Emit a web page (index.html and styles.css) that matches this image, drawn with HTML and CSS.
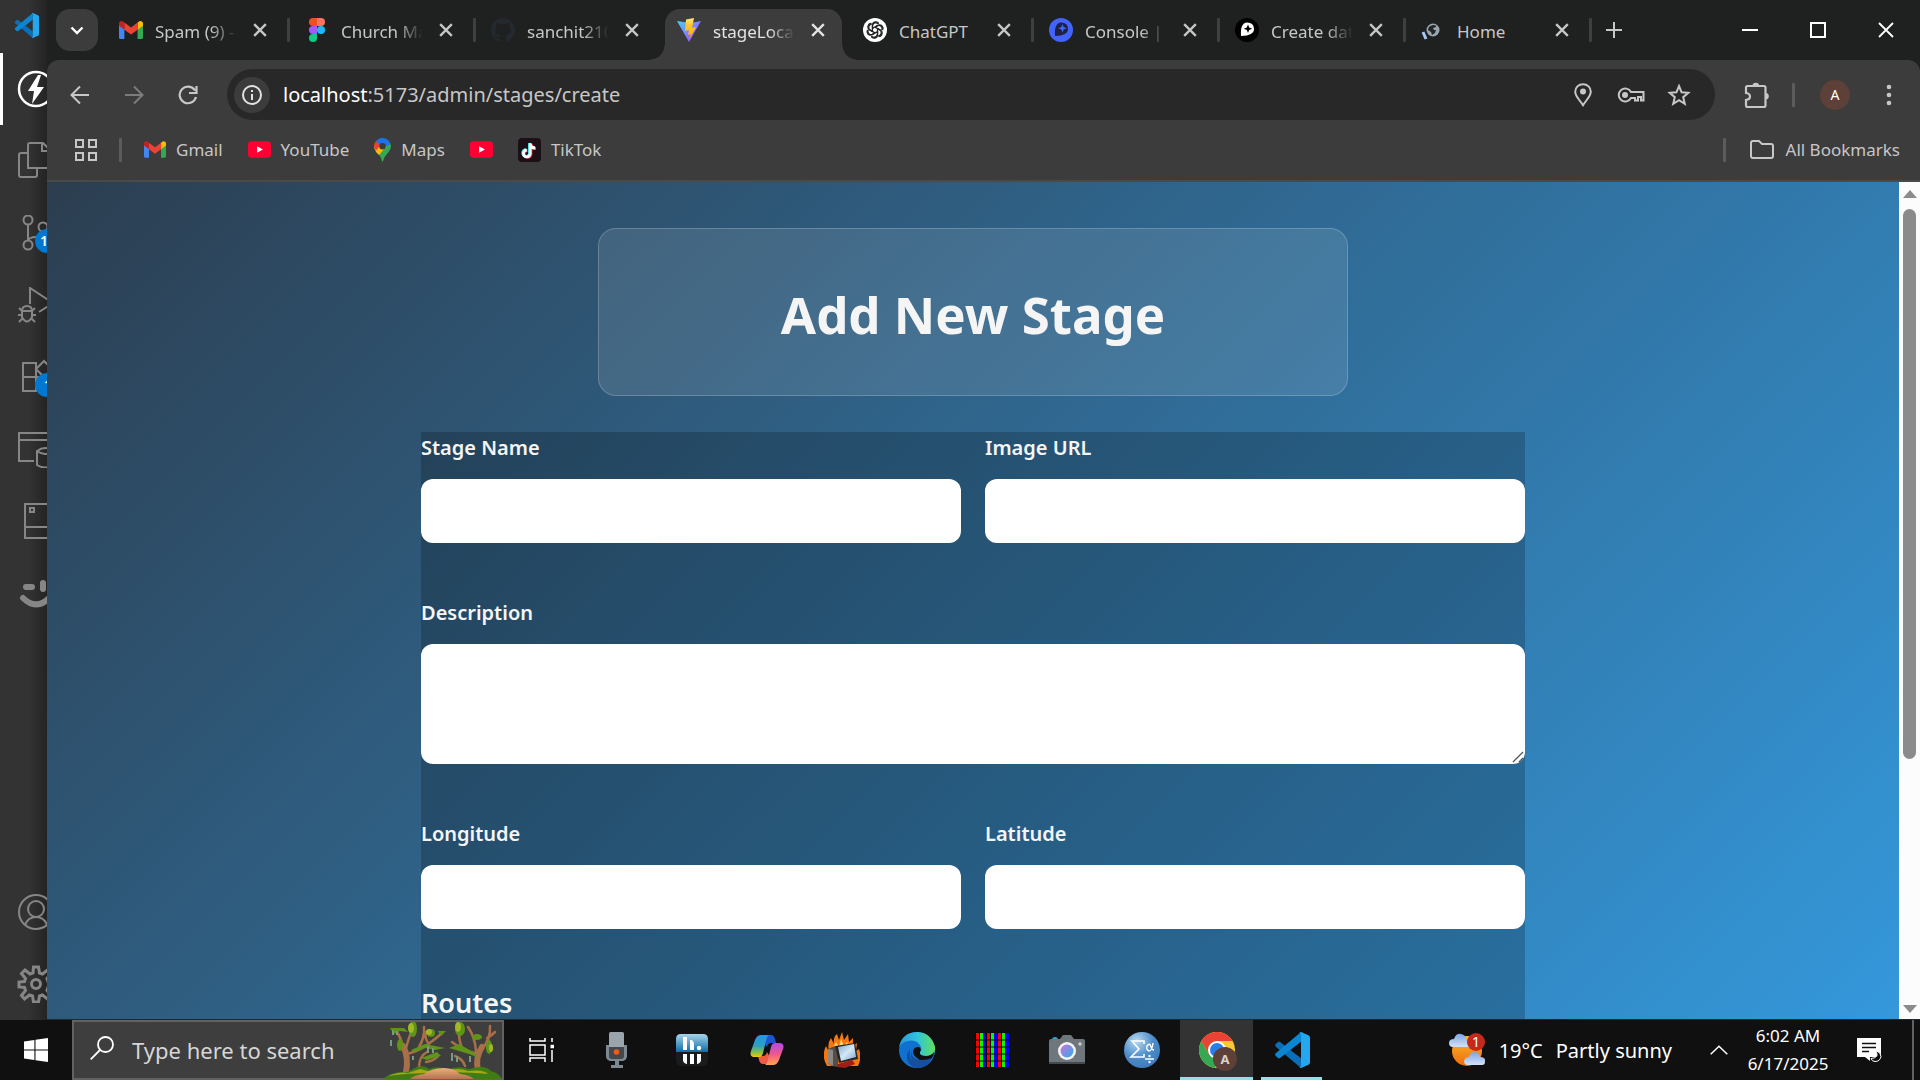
FILE: index.html
```html
<!DOCTYPE html>
<html lang="en">
<head>
<meta charset="utf-8">
<title>Add New Stage</title>
<link rel="stylesheet" href="styles.css">
</head>
<body>
<svg class="defs" aria-hidden="true">
  <defs>
    <linearGradient id="vite-blue" x1="0" y1="0" x2="1" y2="1"><stop offset="0" stop-color="#41d1ff"/><stop offset="1" stop-color="#bd34fe"/></linearGradient>
    <linearGradient id="vite-gold" x1="0" y1="0" x2="0" y2="1"><stop offset="0" stop-color="#ffea83"/><stop offset=".3" stop-color="#ffca28"/><stop offset="1" stop-color="#ffa800"/></linearGradient>
    <linearGradient id="edge-top" x1="0" y1="0" x2="1" y2="0"><stop offset="0" stop-color="#2797d8"/><stop offset=".5" stop-color="#2fc3dd"/><stop offset="1" stop-color="#62e05a"/></linearGradient>
    <linearGradient id="cop-a" x1="0" y1="0" x2="0" y2="1"><stop offset="0" stop-color="#1a9be8"/><stop offset=".5" stop-color="#2f9fc0"/><stop offset=".8" stop-color="#8fc03c"/><stop offset="1" stop-color="#f5c518"/></linearGradient>
    <linearGradient id="cop-b" x1="0" y1="0" x2="0" y2="1"><stop offset="0" stop-color="#b04be8"/><stop offset=".5" stop-color="#f0568c"/><stop offset="1" stop-color="#ffa34d"/></linearGradient>
    <linearGradient id="lens" x1="0" y1="0" x2="1" y2="1"><stop offset="0" stop-color="#d070d8"/><stop offset="1" stop-color="#28b0f0"/></linearGradient>
    <radialGradient id="ball" cx=".35" cy=".25" r=".9"><stop offset="0" stop-color="#b8daf2"/><stop offset=".5" stop-color="#4d8cc8"/><stop offset="1" stop-color="#3a78b8"/></radialGradient>
    <linearGradient id="sun" x1="0" y1="0" x2="0" y2="1"><stop offset="0" stop-color="#fbbc2a"/><stop offset="1" stop-color="#ef6a10"/></linearGradient>
    <linearGradient id="cloud" x1="0" y1="0" x2="0" y2="1"><stop offset="0" stop-color="#7da5e8"/><stop offset="1" stop-color="#d4e2fa"/></linearGradient>
    <linearGradient id="bars" x1="0" y1="0" x2="0" y2="1"><stop offset="0" stop-color="#a8d4ea"/><stop offset="1" stop-color="#0a6ea8"/></linearGradient>
    <linearGradient id="screen" x1="0" y1="0" x2="1" y2="1"><stop offset="0" stop-color="#7fa8cc"/><stop offset=".5" stop-color="#d4e8f6"/><stop offset="1" stop-color="#7ba6cc"/></linearGradient>
    <linearGradient id="path-sand" x1="0" y1="0" x2="0" y2="1"><stop offset="0" stop-color="#eab080"/><stop offset="1" stop-color="#b8704c"/></linearGradient>
    <symbol id="i-vscode" viewBox="0 0 24 24"><path fill="#0a6fb8" d="M1 8.2 2.7 6.6q.7-.4 1.3 0L18 17.5V24L1.2 9.8Q.5 9 1 8.2z"/><path fill="#0a86d2" d="M1 15.8l1.7 1.6q.7.4 1.3 0L18 6.5V0L1.2 14.2q-.7.8-.2 1.6z"/><path fill="#25a7ee" d="M17 .4 18 0l5 2.2q1 .5 1 1.5v16.6q0 1-1 1.5L18 24l-1-.4 1-.8V1.2z"/></symbol>
    <symbol id="i-gmail" viewBox="0 0 24 18"><path fill="#4285f4" d="M0 3v13.4Q0 18 1.6 18H5.4V7z"/><path fill="#34a853" d="M24 3v13.4q0 1.6-1.6 1.6H18.6V7z"/><path fill="#fbbc04" d="M18.6 1.6V8.7L24 4.7V2.5C24 .2 21.3-.8 19.600.8z"/><path fill="#c5221f" d="M0 2.500V4.700L5.400 8.700V1.600L4.400.800C2.700-.800 0 .200 0 2.500z"/><path fill="#ea4335" d="M5.400 8.700V1.600L12 6.500l6.600-4.900v7.100L12 13.600z"/></symbol>
    <symbol id="i-youtube" viewBox="0 0 24 17"><rect width="24" height="17" rx="3.500" fill="#ff0033"/><path fill="#fff" d="M9.500 5v7l6-3.500z"/></symbol>
    <symbol id="i-close" viewBox="0 0 12 12"><path d="M1 1l10 10M11 1 1 11" fill="none" stroke="currentColor" stroke-width="2"/></symbol>
  </defs>
</svg>

<div class="desktop">
  <div class="workspace">
    <nav class="activity" aria-label="Editor activity bar">
      <div class="editor-logo"><svg width="25" height="25"><use href="#i-vscode"/></svg></div>
      <button class="act active" aria-label="Thunder client"><svg width="38" height="38" viewBox="0 0 38 38"><circle cx="19" cy="19" r="17" fill="none" stroke="#fff" stroke-width="2.500"/><path fill="#fff" stroke="none" d="M21 5 11 21h6l-2 13 12-17h-7l4-12z"/></svg></button>
      <button class="act" aria-label="Explorer"><svg width="40" height="40" viewBox="0 0 40 40"><path d="M12 27V4q0-2 2-2h13l7 7v16q0 2-2 2zM12 12H5q-2 0-2 2v20q0 2 2 2h14q2 0 2-2v-7M26 2v8h8"/></svg></button>
      <button class="act" aria-label="Source control"><svg width="36" height="36" viewBox="0 0 36 36"><circle cx="10" cy="5" r="4.500"/><circle cx="10" cy="30" r="4.500"/><circle cx="25" cy="12" r="4.500"/><path d="M10 10v15M25 17q0 5-7 5-7 0-8 4"/></svg><span class="count">1</span></button>
      <button class="act" aria-label="Run and debug"><svg width="36" height="36" viewBox="0 0 36 36"><path d="M12 17V1l23 15-14 9"/><path d="M4 24q0-5 5-5t5 5v6q-5 9-10 0zM4 24h10M1 21l3 3M17 21l-3 3M0 28h4M14 28h4M1 35l4-4M17 35l-4-4"/></svg></button>
      <button class="act" aria-label="Extensions"><svg width="36" height="36" viewBox="0 0 36 36"><path d="M5 4h13v28H5zM5 18h27v14H18M26 2l8 8-8 8-8-8z"/></svg><span class="count low">1</span></button>
      <button class="act" aria-label="Database"><svg width="38" height="38" viewBox="0 0 38 38"><path d="M17 31H2V3h34v14M2 10h34"/><path d="M20 21q8-6 16 0v14q-8 5-16 0zM20 21q8 6 16 0"/></svg></button>
      <button class="act" aria-label="Storage"><svg width="36" height="36" viewBox="0 0 36 36"><path d="M7 1h28v34H7zM7 24h28M12 5h4v4h-4z"/></svg></button>
      <button class="act" aria-label="Assistant"><svg width="36" height="36" viewBox="0 0 36 36"><path class="thick" d="M8 12h6M25 8v6M5 23q13 13 26 0"/></svg></button>
      <span class="spacer"></span>
      <button class="act" aria-label="Accounts"><svg width="38" height="38" viewBox="0 0 38 38"><circle cx="19" cy="19" r="17"/><circle cx="19" cy="16" r="8"/><path d="M8 32q3-8 11-8t11 8"/></svg></button>
      <button class="act" aria-label="Manage"><svg width="38" height="38" viewBox="0 0 38 38"><circle cx="19" cy="19" r="4.500" stroke-width="3"/><path stroke-width="3" d="M16.500 2h5l1 6 3 1 5-4 3.500 3.500-4 5 1 3 6 .5v5l-6 .5-1 3 4 5-3.500 3.500-5-4-3 1-1 6h-5l-1-6-3-1-5 4L4.500 30.500l4-5-1-3-5.500-.5v-5l5.500-.5 1-3-4-5L8 5l5 4 3-1z"/></svg></button>
    </nav>

    <section class="browser">
      <header class="tabstrip">
        <button class="tab-search" aria-label="Search tabs"><svg width="14" height="9" viewBox="0 0 14 9"><path d="M1.500 1.500 7 7l5.500-5.500" fill="none" stroke="#fff" stroke-width="2.400"/></svg></button>
        <div class="tabs">
          <div class="tab"><svg class="fav" width="24" height="18"><use href="#i-gmail"/></svg><a href="#mail">Spam (9) -</a><button aria-label="Close"><svg width="14" height="14"><use href="#i-close"/></svg></button></div>
          <div class="tab"><svg class="fav" width="24" height="24" viewBox="0 0 24 24"><path fill="#f24e1e" d="M8 0h4v8H8a4 4 0 0 1 0-8z"/><path fill="#ff7262" d="M12 0h4a4 4 0 0 1 0 8h-4z"/><path fill="#a259ff" d="M8 8h4v8H8a4 4 0 0 1 0-8z"/><circle cx="16" cy="12" r="4" fill="#1abcfe"/><path fill="#0acf83" d="M8 16h4v4a4 4 0 1 1-4-4z"/></svg><a href="#church">Church Ma</a><button aria-label="Close"><svg width="14" height="14"><use href="#i-close"/></svg></button></div>
          <div class="tab before"><svg class="fav" width="24" height="24" viewBox="0 0 16 16"><path fill="#24292f" d="M8 0C3.580 0 0 3.580 0 8c0 3.540 2.290 6.530 5.470 7.590.4.070.550-.170.550-.380v-1.490c-2.230.48-2.690-.94-2.690-.94-.36-.92-.89-1.170-.89-1.170-.73-.5.050-.49.050-.49.800.060 1.230.83 1.230.83.71 1.220 1.870.870 2.330.66.070-.52.280-.87.500-1.070-1.780-.2-3.640-.89-3.640-3.950 0-.87.310-1.590.82-2.150-.08-.2-.36-1.020.08-2.120 0 0 .67-.21 2.200.82a7.600 7.600 0 0 1 4 0c1.530-1.040 2.200-.82 2.200-.82.44 1.100.16 1.920.08 2.120.51.56.82 1.270.82 2.150 0 3.070-1.870 3.750-3.650 3.950.29.250.54.73.54 1.480v2.190c0 .210.150.46.55.38A8 8 0 0 0 8 0z"/></svg><a href="#repo">sanchit210</a><button aria-label="Close"><svg width="14" height="14"><use href="#i-close"/></svg></button></div>
          <div class="tab current"><svg class="fav" width="24" height="24" viewBox="0 0 24 24"><path fill="url(#vite-blue)" d="M0 3l12 21L24 3l-10 2z"/><path fill="url(#vite-gold)" d="M17 0 9 1.500 8 13l4-1-1 5 3-1-2 6 7-13-4 1z"/></svg><a href="#stage">stageLoca</a><button aria-label="Close"><svg width="14" height="14"><use href="#i-close"/></svg></button></div>
          <div class="tab"><svg class="fav" width="24" height="24" viewBox="0 0 24 24"><circle cx="12" cy="12" r="12" fill="#fff"/><g fill="none" stroke="#222" stroke-width="1.300"><path id="knot" d="M9.500 10.500V7a3.400 3.400 0 0 1 6.300-1.500M9.500 10.500l4.800-2.800a3.400 3.400 0 0 1 4.500 4.500"/><use href="#knot" transform="rotate(60 12 12)"/><use href="#knot" transform="rotate(120 12 12)"/><use href="#knot" transform="rotate(180 12 12)"/><use href="#knot" transform="rotate(240 12 12)"/><use href="#knot" transform="rotate(300 12 12)"/></g></svg><a class="short" href="#chat">ChatGPT</a><button aria-label="Close"><svg width="14" height="14"><use href="#i-close"/></svg></button></div>
          <div class="tab"><svg class="fav" width="24" height="24" viewBox="0 0 24 24"><circle cx="12" cy="12" r="12" fill="#4264fb"/><path fill="#1f2140" d="M6 18q-1-13 6-13.500 7 0 7 6.500T6 18z"/><path fill="#4264fb" d="m13.500 6 1.200 3 3 1.200-3 1.200-1.200 3-1.200-3-3-1.200 3-1.200z"/></svg><a href="#console">Console |</a><button aria-label="Close"><svg width="14" height="14"><use href="#i-close"/></svg></button></div>
          <div class="tab"><svg class="fav" width="24" height="24" viewBox="0 0 24 24"><circle cx="12" cy="12" r="12"/><path fill="#fff" d="M6 18q-1-13 6-13.500 7 0 7 6.500T6 18z"/><path d="m13 6.500 1.200 3 3 1.200-3 1.200-1.200 3-1.200-3-3-1.200 3-1.200z"/></svg><a href="#create">Create dat</a><button aria-label="Close"><svg width="14" height="14"><use href="#i-close"/></svg></button></div>
          <div class="tab"><svg class="fav" width="24" height="24" viewBox="0 0 24 24"><circle cx="12" cy="12" r="6.500" fill="#9aa5ae"/><path fill="#23282c" d="M12 7q4 0 3 2l-3 1 1 2h2l-1 3-3 2-1-3-3-2q0-4 5-5z"/><path stroke="#a8c7fa" stroke-width="3" d="m2 14 3 7"/></svg><a class="short" href="#home">Home</a><button aria-label="Close"><svg width="14" height="14"><use href="#i-close"/></svg></button></div>
        </div>
        <button class="new-tab" aria-label="New tab"><svg width="16" height="16" viewBox="0 0 16 16"><path d="M8 0v16M0 8h16" stroke="#c7c7c7" stroke-width="2"/></svg></button>
        <span class="spacer"></span>
        <button class="win" aria-label="Minimize"><svg width="16" height="16" viewBox="0 0 16 16"><path d="M0 8h16" stroke="#fff" stroke-width="2"/></svg></button>
        <button class="win" aria-label="Maximize"><svg width="16" height="16" viewBox="0 0 16 16"><path d="M1 1h14v14H1z" fill="none" stroke="#fff" stroke-width="2"/></svg></button>
        <button class="win" aria-label="Close window"><svg width="16" height="16" viewBox="0 0 16 16"><path d="m1 1 14 14M15 1 1 15" stroke="#fff" stroke-width="1.800"/></svg></button>
      </header>

      <div class="chrome">
        <div class="toolbar">
          <button aria-label="Back"><svg width="20" height="20" viewBox="0 0 20 20"><path d="M19 10H2M10 1.500 1.500 10l8.500 8.500" fill="none" stroke="#c7c7c7" stroke-width="2"/></svg></button>
          <button aria-label="Forward"><svg width="20" height="20" viewBox="0 0 20 20"><path d="M1 10h17M10 1.500 18.500 10 10 18.500" fill="none" stroke="#7c7c7c" stroke-width="2"/></svg></button>
          <button aria-label="Reload"><svg width="20" height="20" viewBox="0 0 20 20"><path d="M17 5.500A8.300 8.300 0 1 0 18 12M18.500 1v7H11" fill="none" stroke="#c7c7c7" stroke-width="2.200"/></svg></button>
          <div class="omnibox">
            <button class="info" aria-label="Site information"><svg width="20" height="20" viewBox="0 0 20 20"><circle cx="10" cy="10" r="9" fill="none" stroke="#e3e3e3" stroke-width="2"/><path d="M10 9v6M10 5v2" stroke="#e3e3e3" stroke-width="2"/></svg></button>
            <a class="url" href="#url"><b>localhost</b>:5173/admin/stages/create</a>
            <button aria-label="Location"><svg width="18" height="24" viewBox="0 0 18 24"><path d="M9 1.200c-4.500 0-7.800 3.300-7.800 7.500 0 4.500 4.300 8 7.800 13.500 3.500-5.500 7.800-9 7.800-13.500C16.800 4.500 13.500 1.200 9 1.200z" fill="none" stroke="#c7c7c7" stroke-width="2"/><circle cx="9" cy="8.500" r="3" fill="#c7c7c7"/></svg></button>
            <button aria-label="Passwords"><svg width="28" height="16" viewBox="0 0 28 16"><path d="M14 5h12.500v8.500h-2.500V10h-3v3.500h-3V11h-4A6.500 6.500 0 1 1 14 5z" fill="none" stroke="#c7c7c7" stroke-width="2"/><circle cx="8" cy="8" r="3" fill="#c7c7c7"/></svg></button>
            <button aria-label="Bookmark"><svg width="24" height="24" viewBox="0 0 24 24"><path d="m12 3 2.600 6.300 6.700.5-5.100 4.400 1.600 6.600L12 17.200l-5.800 3.600 1.600-6.600L2.700 9.800l6.700-.5z" fill="none" stroke="#c7c7c7" stroke-width="2"/></svg></button>
          </div>
          <button class="ext" aria-label="Extensions"><svg width="26" height="26" viewBox="0 0 26 26"><path d="M2 5.500Q2 4 3.500 4H20q1.500 0 1.500 1.500v18q0 1.500-1.500 1.500H3.500Q2 25 2 23.500V18q4-.5 4-3.500T2 11z" fill="none" stroke="#c7c7c7" stroke-width="2.200"/><path fill="#c7c7c7" d="M8.500 4a3.300 3.300 0 0 1 6.600 0zM21.500 11a3.300 3.300 0 0 1 0 6.600z"/></svg></button>
          <i class="rule"></i>
          <button class="avatar">A</button>
          <button class="menu" aria-label="Menu"><svg width="6" height="22" viewBox="0 0 6 22" fill="#c7c7c7"><circle cx="3" cy="3" r="2.300"/><circle cx="3" cy="11" r="2.300"/><circle cx="3" cy="19" r="2.300"/></svg></button>
        </div>
        <nav class="bookmarks" aria-label="Bookmarks">
          <button aria-label="Apps"><svg width="22" height="22" viewBox="0 0 22 22" fill="none" stroke="#c7c7c7" stroke-width="2"><path d="M1 1h7v7H1zM14 1h7v7h-7zM1 14h7v7H1zM14 14h7v7h-7z"/></svg></button>
          <i class="rule"></i>
          <a href="#gmail"><svg width="22" height="17"><use href="#i-gmail"/></svg>Gmail</a>
          <a href="#youtube"><svg width="23" height="17"><use href="#i-youtube"/></svg>YouTube</a>
          <a href="#maps"><svg width="17" height="24" viewBox="0 0 17 24"><path fill="#34a853" d="M1.500 13Q7 18 7.500 22q1 3 2 0 .5-3 3.500-6 4-4.500 4-8.500L15.500 4z"/><path fill="#fbbc04" d="M0 8q0 3 2.500 6.500L5 17l9-10.500z"/><path fill="#ea4335" d="M2 3Q0 5.500 0 8.500l2 4L7.500 6z"/><path fill="#1a73e8" d="M2 3q6-6 12.500-.5Q16 4 16.500 6L9 10z"/><circle cx="8.500" cy="8.300" r="3.200" fill="#3c3c3c"/></svg>Maps</a>
          <a href="#yt" aria-label="YouTube channel"><svg width="23" height="17"><use href="#i-youtube"/></svg></a>
          <a href="#tiktok"><svg width="23" height="24" viewBox="0 0 23 24"><rect width="23" height="24" rx="4" fill="#1c0f16"/><g fill="none" stroke-width="2.800"><path stroke="#25f4ee" d="M11.500 5v10a3.400 3.400 0 1 1-3.400-3.400M11.500 5q.5 4.500 5 4.500"/><path stroke="#fe2c55" d="M13 6v10a3.400 3.400 0 1 1-3.400-3.400M13 6q.5 4.500 5 4.500"/><path stroke="#fff" d="M12.200 5.500v10a3.400 3.400 0 1 1-3.400-3.400M12.200 5.500q.5 4.500 5 4.500"/></g></svg>TikTok</a>
          <span class="spacer"></span>
          <i class="rule"></i>
          <a class="all" href="#all"><svg width="24" height="19" viewBox="0 0 24 19"><path d="M1 16V3q0-2 2-2h6l3 3h9q2 0 2 2v10q0 2-2 2H3q-2 0-2-2z" fill="none" stroke="#c7c7c7" stroke-width="2"/></svg>All Bookmarks</a>
        </nav>
      </div>

      <div class="view">
        <main class="page">
          <div class="title-card"><h1>Add New Stage</h1></div>
          <form class="stage-form">
            <div class="pair">
              <div class="field"><label for="name">Stage Name</label><input id="name" type="text"></div>
              <div class="field"><label for="image">Image URL</label><input id="image" type="text"></div>
            </div>
            <div class="field"><label for="desc">Description</label><div class="area"><textarea id="desc"></textarea><svg class="grip" width="12" height="12" viewBox="0 0 12 12"><path d="M1 11 11 1M7 11l4-4" stroke="#555" stroke-width="1.300"/></svg></div></div>
            <div class="pair">
              <div class="field"><label for="lng">Longitude</label><input id="lng" type="text"></div>
              <div class="field"><label for="lat">Latitude</label><input id="lat" type="text"></div>
            </div>
            <h2>Routes</h2>
          </form>
        </main>
        <div class="scrollbar" aria-hidden="true">
          <svg width="14" height="8" viewBox="0 0 14 8"><path fill="#8b8b8b" d="M7 0l7 8H0z"/></svg>
          <div class="track"><div class="thumb"></div></div>
          <svg width="14" height="8" viewBox="0 0 14 8"><path fill="#8b8b8b" d="M0 0h14L7 8z"/></svg>
        </div>
      </div>
    </section>
  </div>

  <footer class="taskbar">
    <button class="start" aria-label="Start"><svg width="24" height="24" viewBox="0 0 24 24" fill="#fff"><path d="M0 3.400 10.400 2v9.500H0zM11.500 1.800 24 0v11.500H11.500zM0 12.500h10.400V22L0 20.600zM11.500 12.500H24V24l-12.500-1.800z"/></svg></button>
    <div class="search">
      <svg class="glass" width="24" height="24" viewBox="0 0 24 24"><circle cx="15.500" cy="8.500" r="7.500" fill="none" stroke="#fff" stroke-width="1.800"/><path d="M10 14 .7 23.300" stroke="#fff" stroke-width="1.800"/></svg>
      <input type="text" placeholder="Type here to search" aria-label="Type here to search">
      <svg class="trees" width="119" height="57" viewBox="0 0 119 57">
        <g fill="none" stroke="#a8704a" stroke-linecap="round"><path stroke-width="6" d="M23 50q3-15-3-26"/><path stroke-width="2.500" d="M20 26q-2-12-8-18M22 30q4-16 8-24M24 32q15-4 24-12 8-6 12-10M36 25q6-10 5-20M46 22q-5-6-3-12M36 46q0-12 8-16M43 40q8-1 12-6"/><path stroke-width="6" d="M95 49q-3-14 4-24"/><path stroke-width="2.500" d="M98 28q10-10 9-24M96 32q-16-3-27-12M93 29q-1-14-8-24M79 26q-3-8-3-14M104 16q4-2 8-6M82 44q-2-7-10-10"/></g>
        <g fill="#5f9416"><ellipse cx="30" cy="7" rx="4" ry="8"/><ellipse cx="17" cy="23" rx="3" ry="6"/><ellipse cx="77" cy="7" rx="5" ry="7"/><ellipse cx="48" cy="11" rx="4" ry="4"/><ellipse cx="94" cy="15" rx="5" ry="3"/><ellipse cx="106" cy="25" rx="3" ry="7"/><path d="M7 6h14l4 4-8-1-6 3zM28 28l14-6 20 4-10 2-10-2-11 4zM66 26l10-4 14 8 6 6-10-4zM38 36l16-6 4 4-14 4zM55 9l8 0-5 5z"/></g>
        <g fill="#9fba20"><ellipse cx="28" cy="6" rx="3" ry="5"/><ellipse cx="75" cy="5" rx="3" ry="5"/><ellipse cx="46" cy="10" rx="3" ry="3"/><ellipse cx="108" cy="26" rx="2" ry="4"/></g>
        <g stroke="#769a86" stroke-width="2"><path d="M10 8v5M14 9v4M8 18v6M45 24v7M50 26v5M69 31v8M30 34v4M74 34v6M87 34v6"/></g>
        <path fill="#3f7d12" d="M0 57q8-8 24-7l10-5q8-2 12 2 10-4 18 1 10-5 22-1 16-5 22 2 8 2 11 8z"/><path fill="#a3a818" d="M5 54q12-5 20-3l12-4q5 1 8 2 12-3 18 0 12-4 22 0 16-2 20 3-30-3-52-1-30 0-48 3z"/><path fill="url(#path-sand)" d="M27 57q4-4 14-5 8-6 20-6 10 0 16 6 10 1 14 5z"/>
      </svg>
    </div>
    <div class="apps">
      <button aria-label="Task view"><svg width="26" height="24" viewBox="0 0 26 24" fill="none" stroke="#fff" stroke-width="1.500"><path d="M1 0v3h15V0M1 7h15v10H1zM1 24v-4h15v4M23 0v4M23 12v12"/><path stroke-width="3.500" d="M21.500 8.500h3.500"/></svg></button>
      <button aria-label="Voice recorder"><svg width="22" height="36" viewBox="0 0 22 36"><path fill="#7d8890" d="M0 13h21v11q0 4-4 5h-4v4h4v3H5v-3h4v-4H4q-4-1-4-5z"/><path fill="#9aa4ac" d="M3 1.500Q3 0 4.500 0h12Q18 0 18 1.500V17H3z"/><path fill="#43484d" d="M3 15h15v9q0 3-3 3H6q-3 0-3-3z"/><circle cx="10.500" cy="20" r="2.800" fill="#f05a1a"/></svg></button>
      <button aria-label="Audio levels"><svg width="32" height="32" viewBox="0 0 32 32"><rect width="32" height="32" rx="5" fill="#191b1d"/><path fill="url(#bars)" d="M0 18V5q0-5 5-5h22q5 0 5 5v13z"/><path fill="#fff" d="M7 3h4v13H7zM14 6h2q2 2 2 4v6h-4zM7 20h4v10q-4-1-4-4zM14 20h4v10h-4zM21 20h4v6q0 3-4 4z"/><circle cx="23" cy="14" r="2.200" fill="#fff"/></svg></button>
      <button aria-label="Copilot"><svg width="34" height="32" viewBox="0 0 34 32"><path fill="#1b55d4" d="M10 1h11q3 0 4 4l1 4h-5q-3 0-4 4z"/><path fill="#ee5a44" d="M24 30H13q-3 0-4-4l-1-4h5q3 0 4-4z"/><path fill="url(#cop-a)" d="M19 1H11Q7 1 5 6L1 17q-2 6 4 6h4q3 0 4-4l3-12q1-5 3-6z"/><path fill="url(#cop-b)" d="M15 31h8q4 0 6-5l4-11q2-6-4-6h-4q-3 0-4 4l-3 12q-1 5-3 6z"/></svg></button>
      <button aria-label="Burner"><svg width="36" height="36" viewBox="0 0 36 36"><path fill="#f47710" d="M3 34Q-3 24 2 14l3 6q-2-9 2-14l3 6q-1-7 3-10l2 6 3-8 2 8 4-6 1 8 4-4v8l4-3-1 8 3-2q3 9-1 17z"/><path fill="#ffd76a" d="M9 16l3-6 3 5 2-8 3 7 3-4 4 10z"/><path fill="#554d4a" d="M4 17l7-3 3 2v19l-6-1-4-3z"/><path fill="#8e8885" d="M4 17l5 1v16l-5-3z"/><path fill="#262626" d="M11 14l20-3 3 16-19 4z"/><path fill="url(#screen)" d="M14 15l16-3 2 13-15 4z"/><path fill="#a11c14" d="M14 32l14-4 3 4-10 4-8-1z"/></svg></button>
      <button aria-label="Edge"><svg width="36" height="36" viewBox="0 0 36 36"><circle cx="18" cy="18" r="18" fill="#0f72d0"/><path fill="#164f9e" d="M11 17q-2 14 10 15 7 1 13-5-6 9-16 9Q7 34 8 22z"/><path fill="url(#edge-top)" d="M0 15Q3 0 19 0q13 1 17 15 1 9-9 9-7 0-6-4 2-2 1-5-4-8-13-6Q3 10 0 15z"/><path fill="#101010" d="M14 21q0-7 6-6 3 2 1 5-1 4 6 4 5 0 8-4 0 4-3 7-10 4-14-1-3-2-4-5z"/><path fill="#164f9e" d="M12 19q1 9 10 9 6 0 11-2-5 9-14 9-8-3-7-16z"/></svg></button>
      <button aria-label="Color test"><svg width="34" height="34" viewBox="0 0 34 34"><path fill="#000" d="M0 0h34v34H0z"/><path fill="#f00" d="M1 0h3v34H1zM12 0h3v34h-3zM23 0h3v34h-3z"/><path fill="#0f0" d="M5 0h3v34H5zM16 0h3v34h-3zM27 0h3v34h-3z"/><path fill="#00f" d="M8 0h3v34H8zM19 0h3v34h-3zM31 0h3v34h-3z"/><path d="M0 7h34M0 14h34M0 21h34M0 28h34" stroke="#101010"/></svg></button>
      <button aria-label="Camera"><svg width="36" height="30" viewBox="0 0 36 30"><path fill="#2ba4dc" d="M3 5q0-3 3-3t3 3z"/><path fill="#6f767c" d="M0 6q0-2 2-2h9l3-4h8l3 4h9q2 0 2 2v23H0z"/><path fill="#454a4e" d="M0 27h36v2H0z"/><circle cx="18" cy="16" r="9" fill="#f4f4f4"/><circle cx="18" cy="16" r="6.500" fill="url(#lens)"/><path d="M31 7v4M29 9h4" stroke="#e4e4e4"/></svg></button>
      <button aria-label="Math input"><svg width="36" height="36" viewBox="0 0 36 36"><circle cx="18" cy="18" r="18" fill="url(#ball)"/><g fill="none" stroke="#fff"><path stroke-width="1.600" d="M20 12V9H8l7 8-8 8h13v-3"/><path stroke-width="1.400" d="M29 11q-1 8-4 8-3-1-2-5 3-4 4 1 1 3 3 3M21 27h9"/></g><circle cx="25.500" cy="24" r="1.200" fill="#fff"/><circle cx="25.500" cy="30" r="1.200" fill="#fff"/></svg></button>
      <button class="running focus" aria-label="Chrome"><svg width="36" height="36" viewBox="0 0 36 36"><circle cx="18" cy="18" r="18" fill="#fcc934"/><path fill="#34a853" d="M2.400 9 10.200 22.500 18 26l-2 9.900A18 18 0 0 1 2.400 9z"/><path fill="#ea4335" d="M2.400 9A18 18 0 0 1 33.600 9H18l-7.800 4.500v9z"/><circle cx="18" cy="18" r="9" fill="#fff"/><circle cx="18" cy="18" r="7" fill="#2a7de9"/></svg><span class="profile">A</span></button>
      <button class="running" aria-label="Visual Studio Code"><svg width="36" height="36"><use href="#i-vscode"/></svg></button>
    </div>
    <span class="spacer"></span>
    <button class="weather"><svg width="37" height="34" viewBox="0 0 37 34"><circle cx="18" cy="18" r="15" fill="url(#sun)"/><path fill="url(#cloud)" d="M4 14q-4 0-4-4t5-4q2-6 7-5 5 1 5 5 5 1 4 5 0 3-3 3z"/><path fill="url(#cloud)" d="M19 32q-4 0-4-4 1-4 5-4 1-5 6-5 5 1 5 5 6 0 5 5 0 3-3 3z"/><circle cx="27" cy="9" r="9" fill="#c4291c"/><text x="27" y="14" class="alert" text-anchor="middle">1</text></svg><span>19°C</span><span>Partly sunny</span></button>
    <button class="tray" aria-label="Show hidden icons"><svg width="18" height="10" viewBox="0 0 18 10"><path d="m.7 9.300 8.300-8 8.300 8" fill="none" stroke="#fff" stroke-width="1.500"/></svg></button>
    <button class="clock"><span>6:02 AM</span><span>6/17/2025</span></button>
    <button class="notes" aria-label="Notifications"><svg width="25" height="24" viewBox="0 0 25 24"><path fill="#fff" d="M0 0h24v19H13v4l-5-4H0z"/><path d="M5 5.500h14M5 9.500h14M5 13.500h7" stroke="#101010" stroke-width="1.400"/><path d="M19 12.500q5 2 5 6-1 5-6 5-3 0-4-3 5 0 6-3 0-3-1-5z" fill="#101010" stroke="#fff"/></svg></button>
    <button class="peek" aria-label="Show desktop"></button>
  </footer>
</div>
</body>
</html>
```
FILE: styles.css
```css
* { box-sizing: border-box; }

body {
  margin: 0;
  font-family: "Noto Sans", "Open Sans", sans-serif;
  font-size: 17px;
  color: #c7c7c7;
  background: #101010;
}

button {
  display: flex;
  align-items: center;
  justify-content: center;
  flex: none;
  margin: 0;
  padding: 0;
  border: 0;
  background: none;
  color: inherit;
  font: inherit;
}

a { color: inherit; text-decoration: none; }
svg { flex: none; display: block; }
.defs { position: absolute; width: 0; height: 0; }
.spacer { flex: 1; }

.desktop {
  display: flex;
  flex-direction: column;
  height: 100vh;
  overflow: hidden;
}

.workspace {
  display: flex;
  flex: 1;
  min-height: 0;
}

/* Editor strip peeking out from behind the browser */
.activity {
  display: flex;
  flex-direction: column;
  flex: none;
  width: 47px;
  overflow: hidden;
  background: linear-gradient(90deg, transparent 60%, rgba(0, 0, 0, .3)), #333;
}
.editor-logo { height: 53px; padding: 13px 0 0 14px; }
.act {
  position: relative;
  width: 72px;
  height: 72px;
}
.act svg { fill: none; stroke: #868686; stroke-width: 2; }
.act.active { border-left: 3px solid #fff; padding-right: 3px; }
.act .thick { stroke-width: 6; stroke-linecap: round; }
.count {
  position: absolute;
  left: 35px;
  top: 32px;
  width: 24px;
  height: 24px;
  border-radius: 12px;
  background: #0078d0;
  color: #fff;
  font-size: 14px;
  font-weight: 600;
  line-height: 24px;
  padding-left: 5px;
  text-align: left;
}
.count.low { padding-left: 9px; }

/* Browser window */
.browser {
  display: flex;
  flex-direction: column;
  flex: 1;
  min-width: 0;
  border-bottom: 1px solid #1c2a35;
  background: #1f2120;
}
.tabstrip {
  display: flex;
  align-items: center;
  height: 60px;
  padding-left: 9px;
}
.tab-search {
  width: 42px;
  height: 42px;
  border-radius: 14px;
  background: #3c3c3c;
}
.tabs { display: flex; margin-left: 9px; align-self: flex-end; }
.tab {
  position: relative;
  display: flex;
  align-items: center;
  width: 186px;
  height: 51px;
  padding: 0 26px 9px 12px;
}
.tab::after {
  content: "";
  position: absolute;
  right: 3px;
  top: 9px;
  width: 3px;
  height: 24px;
  border-radius: 1px;
  background: #3f3f3f;
}
.tab .fav { margin-right: 12px; }
.tab a {
  flex: 1;
  min-width: 0;
  overflow: hidden;
  white-space: nowrap;
  padding-top: 3px;
  line-height: 24px;
  mask-image: linear-gradient(90deg, #000 55px, transparent);
}
.tab .short { mask-image: none; }
.tab button { margin-left: 16px; width: 14px; }
.tab.before::after, .tab.current::after { background: none; }
.tab.current { color: #e3e3e3; }
.tab.current::before {
  content: "";
  position: absolute;
  left: 0;
  top: 0;
  width: 177px;
  height: 51px;
  border-radius: 15px 15px 0 0;
  background: #3c3c3c;
}
.tab.current > * { position: relative; }
.tab.current::after {
  left: -15px;
  top: 36px;
  width: 207px;
  height: 15px;
  background:
    radial-gradient(circle at 0 0, transparent 14px, #3c3c3c 15px) 0 0 / 15px 15px no-repeat,
    radial-gradient(circle at 15px 0, transparent 14px, #3c3c3c 15px) 192px 0 / 15px 15px no-repeat;
}
.new-tab { width: 38px; }
.win { width: 68px; height: 60px; }

.chrome {
  background: #3c3c3c;
  border-bottom: 2px solid #4a4a48;
  border-radius: 12px 12px 0 0;
  height: 122px;
}
.toolbar {
  display: flex;
  align-items: center;
  height: 69px;
  padding: 0 4px 0 6px;
}
.toolbar > button { width: 54px; }
.omnibox {
  display: flex;
  align-items: center;
  flex: 1;
  height: 51px;
  margin-left: 12px;
  padding: 0 12px 0 7px;
  border-radius: 26px;
  background: #282828;
}
.omnibox button { width: 48px; }
.omnibox .info {
  width: 36px;
  height: 36px;
  border-radius: 18px;
  background: #3c3c3c;
}
.url { flex: 1; margin-left: 13px; font-size: 20px; }
.url b { font-weight: 400; color: #fff; }
.rule {
  width: 3px;
  height: 24px;
  border-radius: 1px;
  background: #5c5c5c;
}
.toolbar .ext { width: 77px; padding-left: 6px; }
.toolbar .avatar {
  width: 30px;
  height: 30px;
  margin: 0 12px 0 25px;
  border-radius: 15px;
  background: #5d4037;
  color: #fff;
  font-size: 14px;
}
.bookmarks {
  display: flex;
  align-items: center;
  height: 41px;
  padding: 0 20px 0 28px;
}
.bookmarks .rule { margin: 0 22px; }
.bookmarks a {
  display: flex;
  align-items: center;
  gap: 10px;
  margin-right: 25px;
}
.bookmarks .spacer + .rule { margin-right: 24px; }
.bookmarks .all { gap: 12px; margin: 0; }

/* Stage form page */
.view { display: flex; flex: 1; min-height: 0; }
.page {
  flex: 1;
  overflow: hidden;
  padding-top: 46px;
  background: linear-gradient(135deg, #2c3e50, #3498db);
  color: #f5f5f5;
}
.title-card {
  display: flex;
  align-items: center;
  justify-content: center;
  max-width: 750px;
  height: 168px;
  margin: 0 auto 36px;
  border: 1px solid rgba(255, 255, 255, .2);
  border-radius: 18px;
  background: rgba(255, 255, 255, .1);
}
h1 { margin: 4px 0 0; font-size: 51px; font-weight: 700; line-height: 72px; }
.stage-form {
  display: flex;
  flex-direction: column;
  gap: 54px;
  max-width: 1104px;
  min-height: 800px;
  margin: 0 auto;
  background: rgba(0, 0, 0, .2);
}
.pair { display: grid; grid-template-columns: 1fr 1fr; gap: 24px; }
.field { display: flex; flex-direction: column; }
label {
  margin-bottom: 15px;
  font-size: 20px;
  font-weight: 600;
  line-height: 32px;
}
.field input, .field textarea {
  width: 100%;
  height: 64px;
  border: 0;
  border-radius: 12px;
  background: #fff;
  font-size: 20px;
  padding: 16px;
}
.area { position: relative; }
.field textarea { display: block; height: 120px; resize: none; }
.grip { position: absolute; right: 1px; bottom: 1px; }
h2 { margin: 0; font-size: 27px; font-weight: 600; line-height: 40px; }

.scrollbar {
  display: flex;
  flex-direction: column;
  align-items: center;
  width: 21px;
  padding: 8px 0 6px;
  background: #fcfcfc;
}
.track { flex: 1; padding: 11px 0; }
.thumb {
  width: 13px;
  height: 70%;
  border-radius: 7px;
  background: #8b8b8b;
}

/* Windows taskbar */
.taskbar {
  display: flex;
  align-items: center;
  flex: none;
  height: 60px;
  background: #101010;
  color: #fff;
  font-size: 20px;
}
.taskbar button { height: 60px; }
.start { width: 72px; }
.search {
  display: flex;
  align-items: center;
  width: 432px;
  height: 60px;
  padding-left: 16px;
  border: 2px solid #626262;
  background: #3e3e3e;
}
.search input {
  flex: 1;
  min-width: 0;
  height: 32px;
  margin-left: 18px;
  padding: 0;
  border: 0;
  background: none;
  color: #fff;
  font: inherit;
  font-size: 22px;
}
.search input::placeholder { color: #d6d6d6; }
.search .glass { margin-bottom: 4px; }
.apps { display: flex; }
.apps button { position: relative; width: 75px; }
.apps .running::after {
  content: "";
  position: absolute;
  left: 7px;
  right: 7px;
  bottom: 0;
  height: 3px;
  background: #8fe3e8;
}
.apps .focus { background: linear-gradient(#333, #333) center / 73px 60px no-repeat; }
.apps .focus::after { left: 1px; right: 1px; }
.profile {
  position: absolute;
  left: 34px;
  top: 27px;
  width: 24px;
  height: 24px;
  border-radius: 12px;
  background: #5d4037;
  color: #d8d0cc;
  font-size: 13px;
  font-weight: 700;
  line-height: 24px;
}
.weather { gap: 13px; margin-right: 20px; }
.alert { font-size: 14px; fill: #fff; }
.tray { width: 54px; }
.clock {
  flex-direction: column;
  width: 84px;
  margin-right: 18px;
  font-size: 17px;
  line-height: 28px;
}
.notes { width: 42px; }
.peek { width: 8px; margin-left: 22px; border-left: 2px solid #626262; }
```
